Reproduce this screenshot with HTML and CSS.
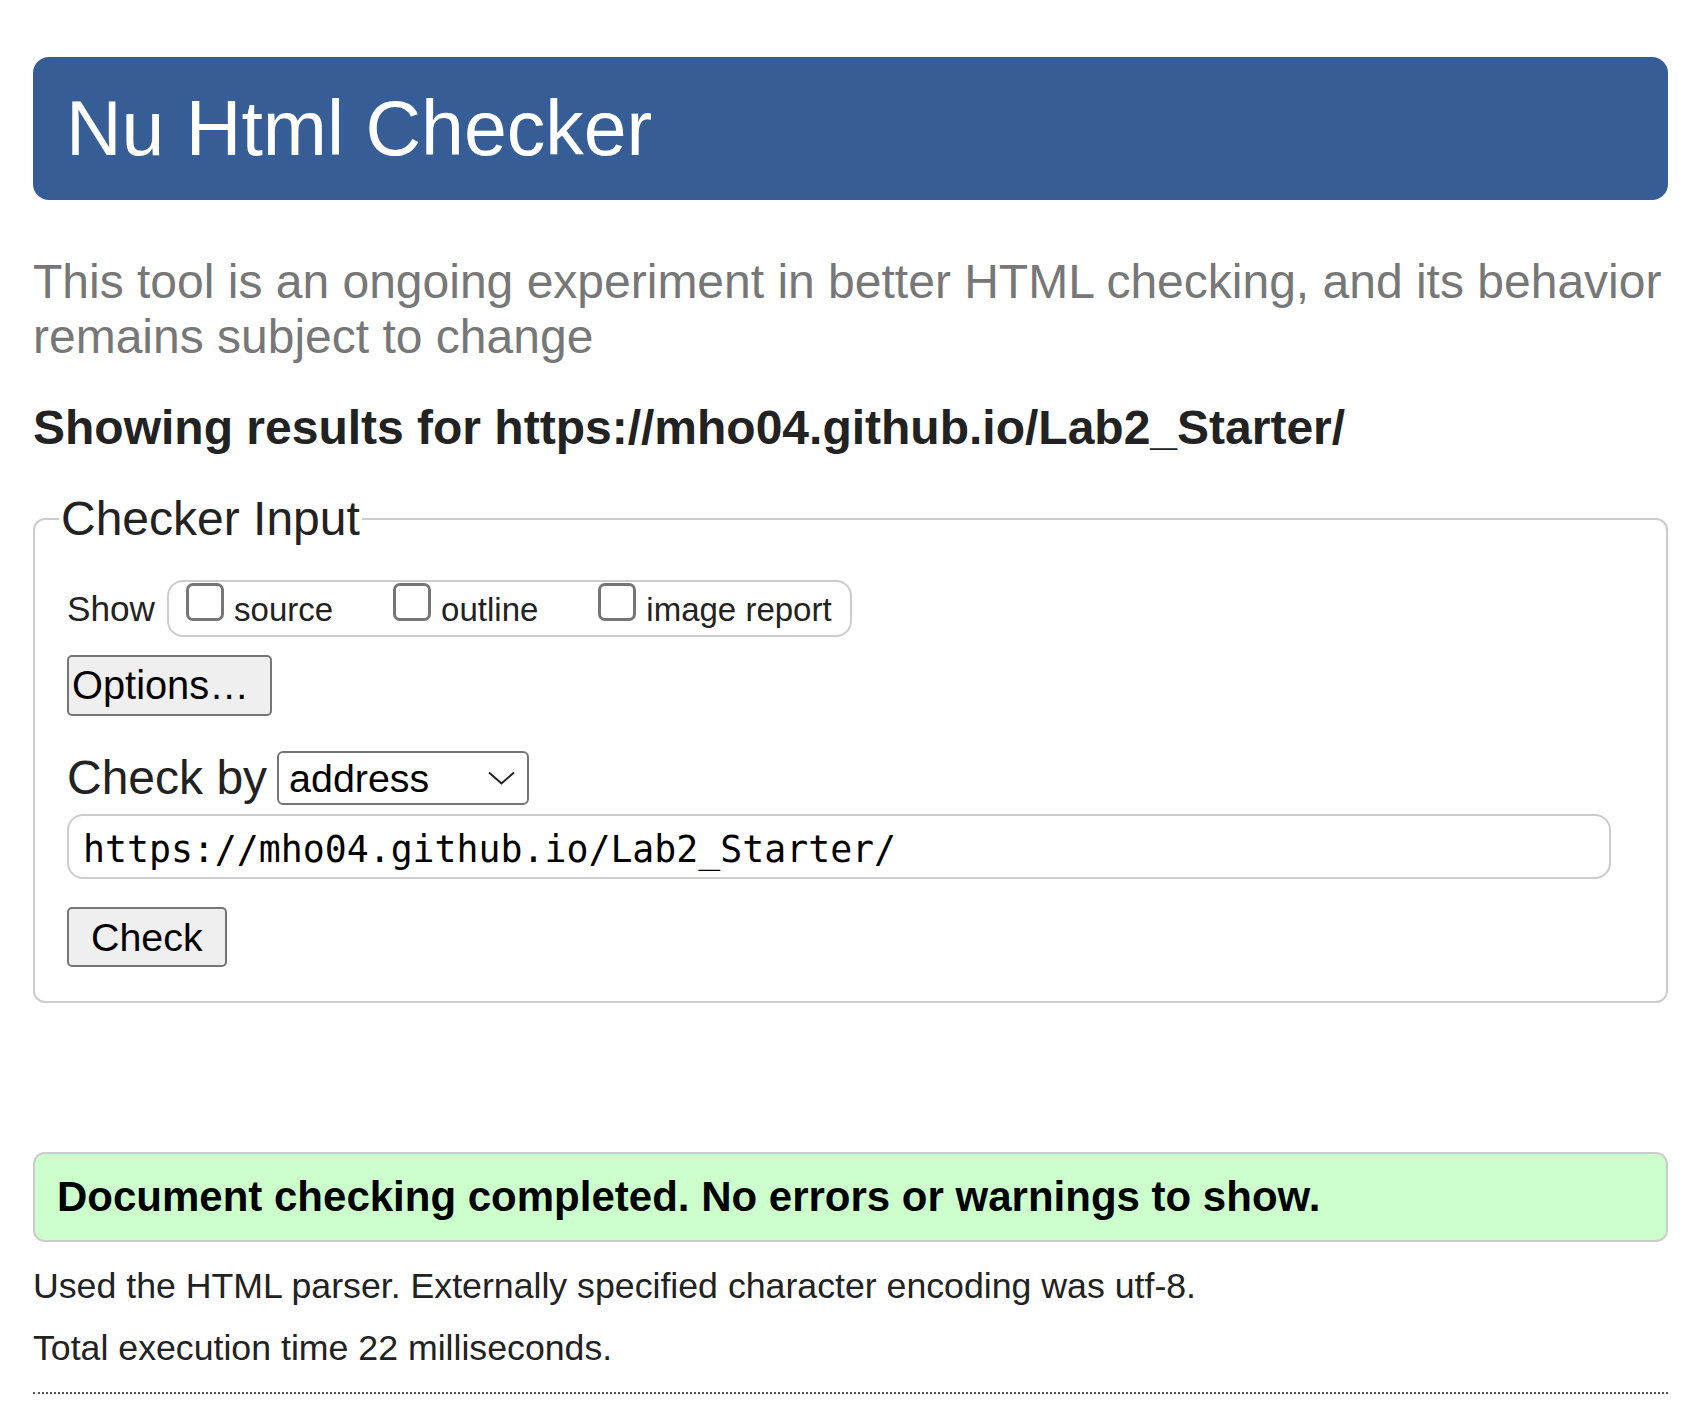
FILE: index.html
```html
<!DOCTYPE html>
<html lang="en">
<head>
<meta charset="utf-8">
<title>Nu Html Checker</title>
<link rel="stylesheet" href="styles.css">
</head>
<body>
<header class="banner"><h1 class="title">Nu Html Checker</h1></header>
<p class="about">This tool is an ongoing experiment in better HTML checking, and its behavior remains subject to change</p>
<h2 class="results-for">Showing results for https://mho04.github.io/Lab2_Starter/</h2>
<form class="checker-form">
  <fieldset class="checker-input">
    <legend class="checker-legend">Checker Input</legend>
    <div class="show-row">
      <span class="show-label">Show</span>
      <div class="show-options">
        <label class="opt"><input type="checkbox" class="cb"><span>source</span></label>
        <label class="opt"><input type="checkbox" class="cb"><span>outline</span></label>
        <label class="opt opt-last"><input type="checkbox" class="cb"><span>image report</span></label>
      </div>
    </div>
    <div class="options-row"><button type="button" class="btn btn-options">Options…</button></div>
    <div class="checkby-row">
      <span class="checkby-label">Check by</span>
      <span class="select-wrap">
        <select class="select"><option>address</option></select>
        <svg class="chevron" width="27" height="14" viewBox="0 0 27 14"><path d="M1 1.5 L13.5 12.5 L26 1.5" fill="none" stroke="#222" stroke-width="2"/></svg>
      </span>
    </div>
    <input class="url" type="url" value="https://mho04.github.io/Lab2_Starter/">
    <div class="submit-row"><button type="button" class="btn btn-check">Check</button></div>
  </fieldset>
</form>
<div class="success">Document checking completed. No errors or warnings to show.</div>
<p class="meta meta-parser">Used the HTML parser. Externally specified character encoding was utf-8.</p>
<p class="meta meta-time">Total execution time 22 milliseconds.</p>
<hr class="dotted">
</body>
</html>
```
FILE: styles.css
```css
html { background: #fff; }
body {
  margin: 0 27px 0 33px;
  font-family: "Liberation Sans", Arial, sans-serif;
  font-size: 35.2px;
  color: #222;
}
.banner {
  margin-top: 57px;
  background: #365d95;
  border-radius: 16px;
  padding: 27px 29px 27px 33px;
}
.title {
  margin: 0;
  font-size: 77px;
  font-weight: normal;
  color: #fff;
  line-height: normal;
}
.about {
  margin: 54px 0 0;
  font-size: 48px;
  color: #777;
}
.results-for {
  margin: 36px 0 0;
  font-size: 48px;
  font-weight: bold;
  color: #222;
}
.checker-form { margin: 0; }
.checker-input {
  margin: 36px 0 0;
  border: 2px solid #ccc;
  border-radius: 12px;
  padding: 34px 32px 34px;
  min-width: 0;
}
.checker-legend {
  font-size: 48px;
  padding: 0 2px;
  margin-left: -8px;
  color: #222;
}
.show-row {
  display: flex;
  align-items: baseline;
  gap: 12px;
}
.show-label { font-size: 35.2px; }
.show-options {
  display: flex;
  align-items: baseline;
  border: 2px solid #ccc;
  border-radius: 16px;
  padding: 1px 18px 6px 17px;
  font-size: 33px;
}
.opt {
  display: flex;
  align-items: baseline;
  margin-right: 60px;
}
.opt-last { margin-right: 0; }
.cb {
  appearance: none;
  -webkit-appearance: none;
  box-sizing: border-box;
  width: 38px;
  height: 38px;
  margin: 0 10px 0 0;
  border: 3px solid #767676;
  border-radius: 7px;
  background: #fff;
}
.options-row { margin-top: 18px; }
.btn {
  box-sizing: border-box;
  font-family: "Liberation Sans", Arial, sans-serif;
  font-size: 39.4px;
  color: #000;
  background: #efefef;
  border: 2px solid #767676;
  border-radius: 5px;
}
.btn-options {
  height: 61px;
  padding: 0 21px 0 3px;
  font-size: 39.8px;
}
.checkby-row {
  margin-top: 34px;
  display: flex;
  align-items: center;
  gap: 10px;
  font-size: 48px;
}
.select-wrap {
  position: relative;
  display: block;
}
.select {
  display: block;
  appearance: none;
  -webkit-appearance: none;
  box-sizing: border-box;
  width: 252px;
  height: 54px;
  border: 2px solid #767676;
  border-radius: 6px;
  padding: 0 0 0 10px;
  background: #fff;
  color: #000;
  font-family: "Liberation Sans", Arial, sans-serif;
  font-size: 39.4px;
}
.chevron {
  position: absolute;
  right: 14px;
  top: 20px;
  pointer-events: none;
}
.url {
  display: block;
  box-sizing: border-box;
  margin-top: 9px;
  width: 1544px;
  height: 65px;
  border: 2px solid #ccc;
  border-radius: 16px;
  padding: 6px 14px 0;
  font-family: "DejaVu Sans Mono", "Liberation Mono", monospace;
  font-size: 36.5px;
  color: #000;
  background: #fff;
  outline: none;
}
.submit-row { margin-top: 28px; }
.btn-check {
  height: 60px;
  padding: 0 22px;
}
.success {
  margin-top: 149px;
  background: #ccffcc;
  border: 2px solid #ccc;
  border-radius: 12px;
  padding: 19px 18px 19px 22px;
  font-size: 42px;
  font-weight: bold;
  color: #000;
}
.meta { margin: 0; font-size: 35.7px; color: #222; }
.meta-parser { margin-top: 24px; }
.meta-time { margin-top: 21px; }
.dotted {
  margin: 23px 0 0;
  border: 0;
  border-top: 2px dotted #555;
  height: 0;
}
```
